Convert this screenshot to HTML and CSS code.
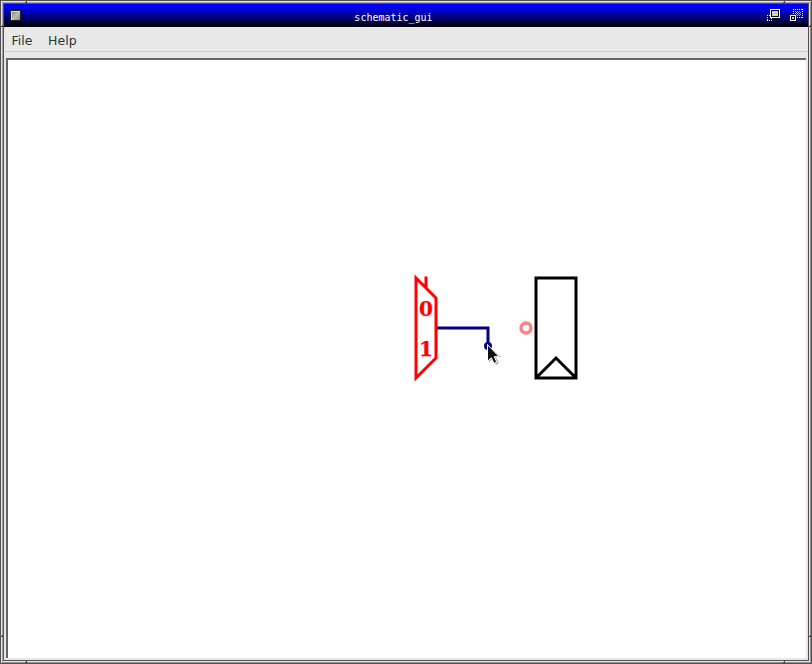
FILE: index.html
```html
<!DOCTYPE html>
<html lang="en">
<head>
<meta charset="utf-8">
<title>schematic_gui</title>
<link rel="stylesheet" href="styles.css">
</head>
<body>
<div class="window">
  <svg class="frame" viewBox="0 0 812 664" shape-rendering="crispEdges" aria-hidden="true">
    <g fill="none">
      <path stroke="#544f54" d="M.5 .5H811.5V663.5H.5Z"/>
      <path stroke="#e6e2e6" d="M1.5 662.5V1.5H810.5"/>
      <path stroke="#969296" d="M810.5 2V662.5H2"/>
      <path stroke="#aaa6aa" d="M2.5 661.5V2.5H809.5"/>
      <path stroke="#e6e2e6" d="M809.5 3V661.5H3"/>
      <path stroke="#544f54" d="M3.5 3.5H808.5V660.5H3.5Z"/>
      <path stroke="#444" d="M26.5 1V3M25 2.5H27M784.5 1V3M783 2.5H785M1 26.5H3M2.5 25V27M809 26.5H811M810.5 25V27M1 636.5H3M2.5 635V637M809 636.5H811M810.5 635V637M26.5 661V663M25 662.5H27M784.5 661V663M783 662.5H785"/>
    </g>
  </svg>
  <header class="titlebar">
    <svg class="menu-button" width="12" height="12" viewBox="0 0 12 12" shape-rendering="crispEdges">
      <defs><linearGradient id="metal" x1="0" y1="0" x2="1" y2="1"><stop offset="0" stop-color="#888"/><stop offset=".5" stop-color="#bbb"/><stop offset="1" stop-color="#848484"/></linearGradient></defs>
      <path fill="#202018" d="M0 0H11V11H0Z"/><path fill="#ddd" d="M1 1H10V10H1Z"/><path fill="url(#metal)" d="M2 2H10V10H2Z"/>
    </svg>
    <h1 class="title">schematic_gui</h1>
    <div class="controls">
      <svg width="13" height="13" viewBox="0 0 13 13" shape-rendering="crispEdges">
        <path fill="#000" d="M2 0H13V10H2Z"/><path fill="#fff" d="M3 0H13V9H3Z"/><path fill="#000" d="M4 1H12V8H4Z"/><path fill="#ccc" d="M5 2H11V7H5Z"/>
        <path stroke="#fff" stroke-dasharray="1 1" d="M0 6.5H3M.5 6V12M0 11.5H5M4.5 9V12"/>
      </svg>
      <svg width="14" height="13" viewBox="0 0 14 13" shape-rendering="crispEdges">
        <path fill="none" stroke="#fff" stroke-dasharray="1 1" d="M3 .5H13M12.5 0V9M3.5 0V6M7 8.5H13"/>
        <path stroke="#aae" stroke-dasharray="1 1" d="M5 2.5H11M6 3.5H11M5 4.5H11M6 5.5H11M7 6.5H11"/>
        <path fill="#fff" d="M0 6H6V12H0Z"/><path fill="#000" d="M1 7H5V11H1Z"/><path fill="#ccc" d="M2 8H4V10H2Z"/>
      </svg>
    </div>
  </header>
  <nav class="menubar"><span class="item">File</span><span class="item">Help</span></nav>
  <main class="canvas">
    <svg class="schematic" viewBox="8 60 798 598">
      <g fill="none" stroke-width="3">
        <path stroke="#000080" d="M436 328H488V346"/>
        <path stroke="#f00" d="M416 278L436 298V358L416 378ZM426 276.5V288"/>
        <circle cx="488" cy="346" r="2.5" stroke="#000080"/>
        <circle class="snap" cx="526" cy="328" r="5"/>
        <path stroke="#000" d="M536 278H576V378H536ZM536 378L556 358L576 378"/>
      </g>
      <text class="pin" x="426" y="316">0</text>
      <text class="pin" x="426" y="356">1</text>
      <path class="pointer-shadow" d="M489 346V362L493 359L496 365L499 363L496 357H501Z"/>
      <path class="pointer" d="M487.5 344.5V361.2L491.3 357.8L494 363.5L496.7 362L494.2 356.7H499Z"/>
    </svg>
  </main>
</div>
</body>
</html>
```
FILE: styles.css
```css
* { box-sizing: border-box; }
body { margin: 0; overflow: hidden; }
.window {
  position: relative;
  width: 812px;
  height: 664px;
  padding: 4px;
  display: flex;
  flex-direction: column;
  background: #e8e8e8;
}
.frame { position: absolute; inset: 0; width: 812px; height: 664px; pointer-events: none; }
.titlebar {
  height: 23px;
  flex: none;
  display: grid;
  grid-template-columns: 60px 1fr 60px;
  align-items: start;
  background: linear-gradient(#0000ff, #0000f4 15%, #000010 95%, #000);
}
.menu-button { display: block; margin: 6px 0 0 6px; }
.title {
  margin: 7px 0 0;
  padding-right: 25px;
  text-align: center;
  color: #fff;
  font: 10px/14px "DejaVu Sans Mono", monospace;
}
.controls { display: flex; justify-content: flex-end; gap: 10px; padding: 5px 4px 0 0; }
.controls svg { display: block; flex: none; }
.menubar {
  height: 25px;
  flex: none;
  display: flex;
  gap: 15.7px;
  padding-left: 7.5px;
  border-bottom: 1px solid #d0d0d0;
  color: #2e3436;
  font: 12.5px/27px "DejaVu Sans", sans-serif;
}
.canvas {
  flex: 1;
  min-height: 0;
  margin: 6px 2px 2px;
  border: solid #666;
  border-width: 2px 0 0 2px;
  background: #fff;
}
.schematic { display: block; width: 798px; height: 598px; }
.pin { fill: #f00; stroke: #f00; stroke-width: .25; font: bold 20px "DejaVu Serif", serif; text-anchor: middle; }
.snap { stroke: #ff8080; stroke-width: 3.4; }
.pointer { fill: #111; stroke: #fff; stroke-width: 1; }
.pointer-shadow { fill: #000; opacity: .3; }
```
